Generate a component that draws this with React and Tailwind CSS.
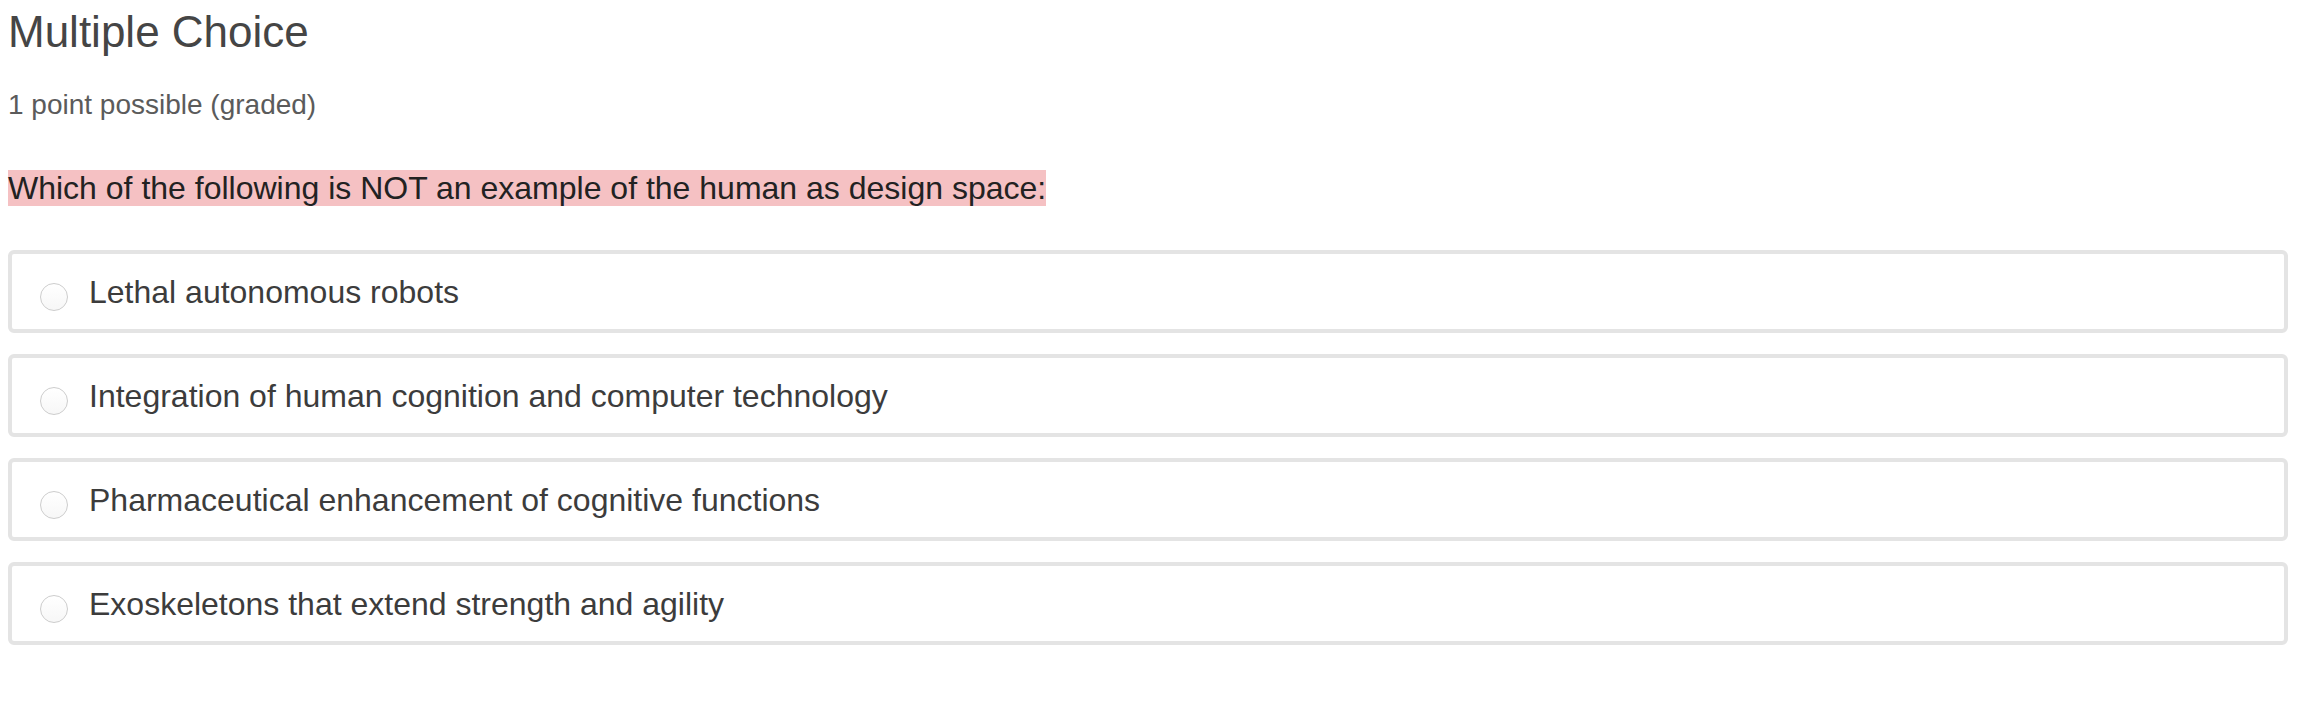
const options = [
  "Lethal autonomous robots",
  "Integration of human cognition and computer technology",
  "Pharmaceutical enhancement of cognitive functions",
  "Exoskeletons that extend strength and agility",
];

function Radio() {
  return (
    <span className="mt-[10px] block h-[28px] w-[28px] shrink-0 rounded-full border border-[#cdcdcd] bg-gradient-to-b from-white to-[#f7f7f7]" />
  );
}

export default function App() {
  return (
    <div className="min-h-[722px] bg-white pl-[8px] font-['Liberation_Sans',Arial,sans-serif]">
      <h1 className="pt-[4px] text-[44px] leading-[56px] font-normal text-[#454545]">
        Multiple Choice
      </h1>
      <div className="mt-[25px] text-[28px] leading-[40px] text-[#5b5b5b]">
        1 point possible (graded)
      </div>
      <p className="mt-[39px] text-[32px] leading-[48px] text-[#222222]">
        <span className="bg-[#f5c1c3]">
          Which of the following is NOT an example of the human as design space:
        </span>
      </p>
      <div className="mt-[38px] flex w-[2280px] flex-col gap-[21px]">
        {options.map((o) => (
          <label
            key={o}
            className="flex h-[83px] cursor-pointer items-center rounded-[6px] border-[4px] border-[#e4e4e4] pl-[28px]"
          >
            <Radio />
            <span className="ml-[21px] text-[32px] leading-[74px] text-[#3c3c3c]">{o}</span>
          </label>
        ))}
      </div>
    </div>
  );
}
